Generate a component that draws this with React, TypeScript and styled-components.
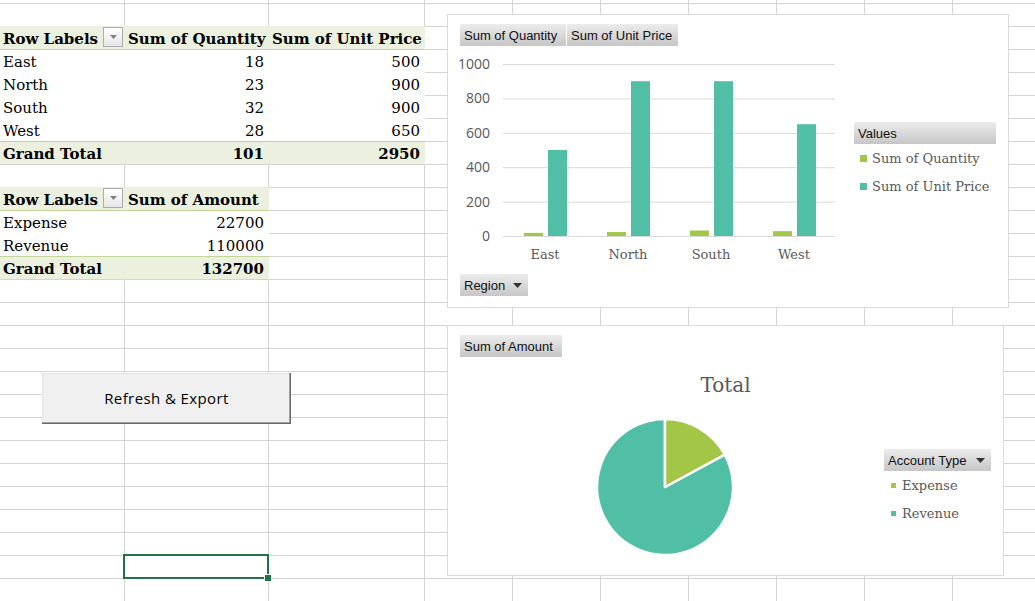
import styled, { createGlobalStyle } from "styled-components";

const GlobalStyle = createGlobalStyle`
  html, body {
    margin: 0;
    padding: 0;
    background: #fff;
    overflow: hidden;
  }
`;

const GRID_LINE = "#d4d4d4";
const PIVOT_FILL = "#ebf1de";
const PIVOT_RULE = "#c4d79b";
const GREEN = "#a2c645";
const TEAL = "#50bfa5";
const LABEL_GREY = "#595959";
const CHART_BORDER = "#d9d9d9";

const COL_WIDTHS = [125, 144, 156, 88, 88, 88, 88, 88, 88, 88];
const ROW_COUNT = 27;
const SELECTED = "25:1";

type CellKind = "head" | "body" | "total";
type CellInfo = { text: string; kind: CellKind; numeric: boolean; filter: boolean };

const cells: Record<string, CellInfo> = {};
function putRow(row: number, kind: CellKind, values: string[]) {
  values.forEach((text, col) => {
    cells[`${row}:${col}`] = {
      text,
      kind,
      numeric: kind !== "head" && col > 0,
      filter: kind === "head" && col === 0,
    };
  });
}

putRow(2, "head", ["Row Labels", "Sum of Quantity", "Sum of Unit Price"]);
putRow(3, "body", ["East", "18", "500"]);
putRow(4, "body", ["North", "23", "900"]);
putRow(5, "body", ["South", "32", "900"]);
putRow(6, "body", ["West", "28", "650"]);
putRow(7, "total", ["Grand Total", "101", "2950"]);
putRow(9, "head", ["Row Labels", "Sum of Amount"]);
putRow(10, "body", ["Expense", "22700"]);
putRow(11, "body", ["Revenue", "110000"]);
putRow(12, "total", ["Grand Total", "132700"]);

const regions = [
  { name: "East", qty: 18, price: 500 },
  { name: "North", qty: 23, price: 900 },
  { name: "South", qty: 32, price: 900 },
  { name: "West", qty: 28, price: 650 },
];

const accounts = { expense: 22700, revenue: 110000 };

export default function App() {
  return (
    <>
      <GlobalStyle />
      <Sheet>
        {Array.from({ length: ROW_COUNT }).map((_, row) =>
          COL_WIDTHS.map((_, col) => {
            const key = `${row}:${col}`;
            const info = cells[key];
            return (
              <Cell
                key={key}
                $kind={info?.kind}
                $numeric={info?.numeric}
                $selected={key === SELECTED}
              >
                {info?.text}
                {info?.filter && (
                  <FilterButton>
                    <svg width="7" height="4" viewBox="0 0 7 4">
                      <polygon points="0,0 7,0 3.5,4" fill="#7f7f7f" />
                    </svg>
                  </FilterButton>
                )}
              </Cell>
            );
          })
        )}

        <ChartFrame $left={447} $top={14} $width={562} $height={294}>
          <ButtonRow>
            <FieldButton $width={106}>Sum of Quantity</FieldButton>
            <FieldButton $width={111}>Sum of Unit Price</FieldButton>
          </ButtonRow>
          <ChartBody>
            <BarPlot />
            <Legend $top={76} $left={14} $width={142}>
              <FieldButton $width={142}>Values</FieldButton>
              <LegendItem $indent={6} $gap={5}>
                <Swatch $color={GREEN} $size={7} />
                Sum of Quantity
              </LegendItem>
              <LegendItem $indent={6} $gap={5}>
                <Swatch $color={TEAL} $size={7} />
                Sum of Unit Price
              </LegendItem>
            </Legend>
          </ChartBody>
          <AxisButtonRow>
            <FieldButton $width={68} $caret>
              Region
              <Caret />
            </FieldButton>
          </AxisButtonRow>
        </ChartFrame>

        <ChartFrame $left={447} $top={325} $width={557} $height={251}>
          <ButtonRow>
            <FieldButton $width={102}>Sum of Amount</FieldButton>
          </ButtonRow>
          <PieTitle>Total</PieTitle>
          <PieBody>
            <PiePlot />
            <Legend $top={32} $left={149} $width={107}>
              <FieldButton $width={107} $caret>
                Account Type
                <Caret />
              </FieldButton>
              <LegendItem $indent={7} $gap={6}>
                <Swatch $color={GREEN} $size={5} />
                Expense
              </LegendItem>
              <LegendItem $indent={7} $gap={6}>
                <Swatch $color={TEAL} $size={5} />
                Revenue
              </LegendItem>
            </Legend>
          </PieBody>
        </ChartFrame>

        <SheetButton>Refresh &amp; Export</SheetButton>
      </Sheet>
    </>
  );
}

function Caret() {
  return (
    <svg width="9" height="5" viewBox="0 0 9 5">
      <polygon points="0,0 9,0 4.5,5" fill="#333" />
    </svg>
  );
}

// plot coordinates are relative to the svg, which starts at the chart's inner left edge (x=448) and y=46 of the page
const Y_ZERO = 190;
const Y_SCALE = 0.172;
const PLOT_LEFT = 55;
const PLOT_RIGHT = 387;
const CAT_WIDTH = 83;

function BarPlot() {
  const ticks = [0, 200, 400, 600, 800, 1000];
  return (
    <svg width="392" height="224" viewBox="0 0 392 224">
      {ticks.map((t) => {
        const y = Y_ZERO - t * Y_SCALE;
        return (
          <g key={t}>
            <line x1={PLOT_LEFT} x2={PLOT_RIGHT} y1={y + 0.5} y2={y + 0.5} stroke={CHART_BORDER} strokeWidth="1" />
            <AxisText x={42} y={y + 5} textAnchor="end">
              {t}
            </AxisText>
          </g>
        );
      })}
      {regions.map((r, i) => {
        const start = PLOT_LEFT + CAT_WIDTH * i;
        const qh = r.qty * Y_SCALE;
        const ph = r.price * Y_SCALE;
        return (
          <g key={r.name}>
            <rect x={start + 21} y={Y_ZERO - qh} width={19} height={qh} fill={GREEN} />
            <rect x={start + 45} y={Y_ZERO - ph} width={19} height={ph} fill={TEAL} />
            <CategoryText x={start + 42} y={213} textAnchor="middle">
              {r.name}
            </CategoryText>
          </g>
        );
      })}
    </svg>
  );
}

function PiePlot() {
  const cx = 70;
  const cy = 70;
  const r = 68;
  const share = accounts.expense / (accounts.expense + accounts.revenue);
  const angle = share * Math.PI * 2;
  const ex = cx + r * Math.sin(angle);
  const ey = cy - r * Math.cos(angle);
  return (
    <svg width="140" height="140" viewBox="0 0 140 140">
      <path
        d={`M${cx},${cy} L${ex},${ey} A${r},${r} 0 1 1 ${cx},${cy - r} Z`}
        fill={TEAL}
        stroke="#fff"
        strokeWidth="2.5"
        strokeLinejoin="round"
      />
      <path
        d={`M${cx},${cy} L${cx},${cy - r} A${r},${r} 0 0 1 ${ex},${ey} Z`}
        fill={GREEN}
        stroke="#fff"
        strokeWidth="2.5"
        strokeLinejoin="round"
      />
    </svg>
  );
}

const Sheet = styled.div`
  position: relative;
  display: grid;
  grid-template-columns: ${COL_WIDTHS.map((w) => `${w}px`).join(" ")};
  grid-template-rows: 4px repeat(${ROW_COUNT - 1}, 23px);
  width: 1035px;
  height: 601px;
  overflow: hidden;
  font-family: "DejaVu Serif", serif;
  color: #000;
`;

const Cell = styled.div<{ $kind?: CellKind; $numeric?: boolean; $selected?: boolean }>`
  position: relative;
  box-sizing: border-box;
  border-right: 1px solid ${GRID_LINE};
  border-bottom: 1px solid ${GRID_LINE};
  padding: 3px 4px 0 3px;
  font-size: 15px;
  line-height: 19px;
  white-space: nowrap;
  overflow: ${(p) => (p.$selected ? "visible" : "hidden")};
  text-align: ${(p) => (p.$numeric ? "right" : "left")};
  z-index: ${(p) => (p.$selected ? 2 : "auto")};

  ${(p) =>
    p.$kind === "head" &&
    `
    background: ${PIVOT_FILL};
    border-right-color: ${PIVOT_FILL};
    border-bottom-color: ${PIVOT_RULE};
    box-shadow: 0 -1px 0 ${PIVOT_FILL};
    font-weight: bold;
  `}
  ${(p) =>
    p.$kind === "body" &&
    `
    background: #fff;
    border-right-color: #fff;
    border-bottom-color: #fff;
  `}
  ${(p) =>
    p.$kind === "total" &&
    `
    background: ${PIVOT_FILL};
    border-right-color: ${PIVOT_FILL};
    box-shadow: 0 -1px 0 ${PIVOT_RULE};
    font-weight: bold;
  `}

  ${(p) =>
    p.$selected &&
    `
    &::after {
      content: "";
      position: absolute;
      top: -2px;
      left: -2px;
      right: -1px;
      bottom: -1px;
      border: 2px solid #217346;
    }
    &::before {
      content: "";
      position: absolute;
      right: -3px;
      bottom: -3px;
      width: 6px;
      height: 6px;
      background: #217346;
      box-shadow: -1px -1px 0 #fff;
      z-index: 1;
    }
  `}
`;

const FilterButton = styled.span`
  position: absolute;
  top: 0;
  right: 1px;
  box-sizing: border-box;
  width: 20px;
  height: 20px;
  border: 1px solid #acacac;
  background: linear-gradient(#ffffff, #e6e6e6);
  display: flex;
  align-items: center;
  justify-content: center;
`;

const ChartFrame = styled.div<{ $left: number; $top: number; $width: number; $height: number }>`
  position: absolute;
  left: ${(p) => p.$left}px;
  top: ${(p) => p.$top}px;
  width: ${(p) => p.$width}px;
  height: ${(p) => p.$height}px;
  box-sizing: border-box;
  border: 1px solid ${CHART_BORDER};
  background: #fff;
  padding-top: 9px;
  display: flex;
  flex-direction: column;
  align-items: flex-start;
  z-index: 3;
`;

const ButtonRow = styled.div`
  display: flex;
  gap: 1px;
  margin-left: 12px;
`;

const FieldButton = styled.div<{ $width: number; $caret?: boolean }>`
  box-sizing: border-box;
  width: ${(p) => p.$width}px;
  height: 22px;
  padding: 0 ${(p) => (p.$caret ? "6px" : "4px")} 0 4px;
  display: flex;
  align-items: center;
  justify-content: space-between;
  background: linear-gradient(#ececec, #c6c6c6);
  font-family: "Liberation Sans", Arial, sans-serif;
  font-size: 13px;
  color: #111;
  white-space: nowrap;
`;

const ChartBody = styled.div`
  display: flex;
  align-items: flex-start;
`;

const AxisButtonRow = styled.div`
  margin: 4px 0 0 12px;
`;

const AxisText = styled.text`
  font-family: "Open Sans", "Liberation Sans", sans-serif;
  font-size: 14px;
  fill: ${LABEL_GREY};
`;

const CategoryText = styled.text`
  font-family: "DejaVu Serif", serif;
  font-size: 13px;
  fill: ${LABEL_GREY};
`;

const Legend = styled.div<{ $top: number; $left: number; $width: number }>`
  display: flex;
  flex-direction: column;
  width: ${(p) => p.$width}px;
  margin: ${(p) => p.$top}px 0 0 ${(p) => p.$left}px;
`;

const LegendItem = styled.div<{ $indent: number; $gap: number }>`
  height: 28px;
  display: flex;
  align-items: center;
  gap: ${(p) => p.$gap}px;
  padding-left: ${(p) => p.$indent}px;
  font-family: "DejaVu Serif", serif;
  font-size: 13px;
  color: ${LABEL_GREY};
  white-space: nowrap;
`;

const Swatch = styled.span<{ $color: string; $size: number }>`
  width: ${(p) => p.$size}px;
  height: ${(p) => p.$size}px;
  background: ${(p) => p.$color};
  flex: none;
`;

const PieTitle = styled.div`
  align-self: stretch;
  margin-top: 15px;
  text-align: center;
  font-family: "DejaVu Serif", serif;
  font-size: 20px;
  line-height: 26px;
  color: ${LABEL_GREY};
`;

const PieBody = styled.div`
  display: flex;
  align-items: flex-start;
  margin: 19px 0 0 147px;

  & > svg {
    flex: none;
  }
`;

const SheetButton = styled.div`
  position: absolute;
  left: 42px;
  top: 373px;
  width: 249px;
  height: 51px;
  box-sizing: border-box;
  padding-bottom: 2px;
  background: #f0f0f0;
  box-shadow: inset -1px -1px 0 #696969, inset -2px -2px 0 #a0a0a0, inset 1px 1px 0 #e3e3e3;
  display: flex;
  align-items: center;
  justify-content: center;
  font-family: "Open Sans", "Liberation Sans", sans-serif;
  font-size: 15px;
  letter-spacing: 0.4px;
  color: #000;
  z-index: 3;
`;
